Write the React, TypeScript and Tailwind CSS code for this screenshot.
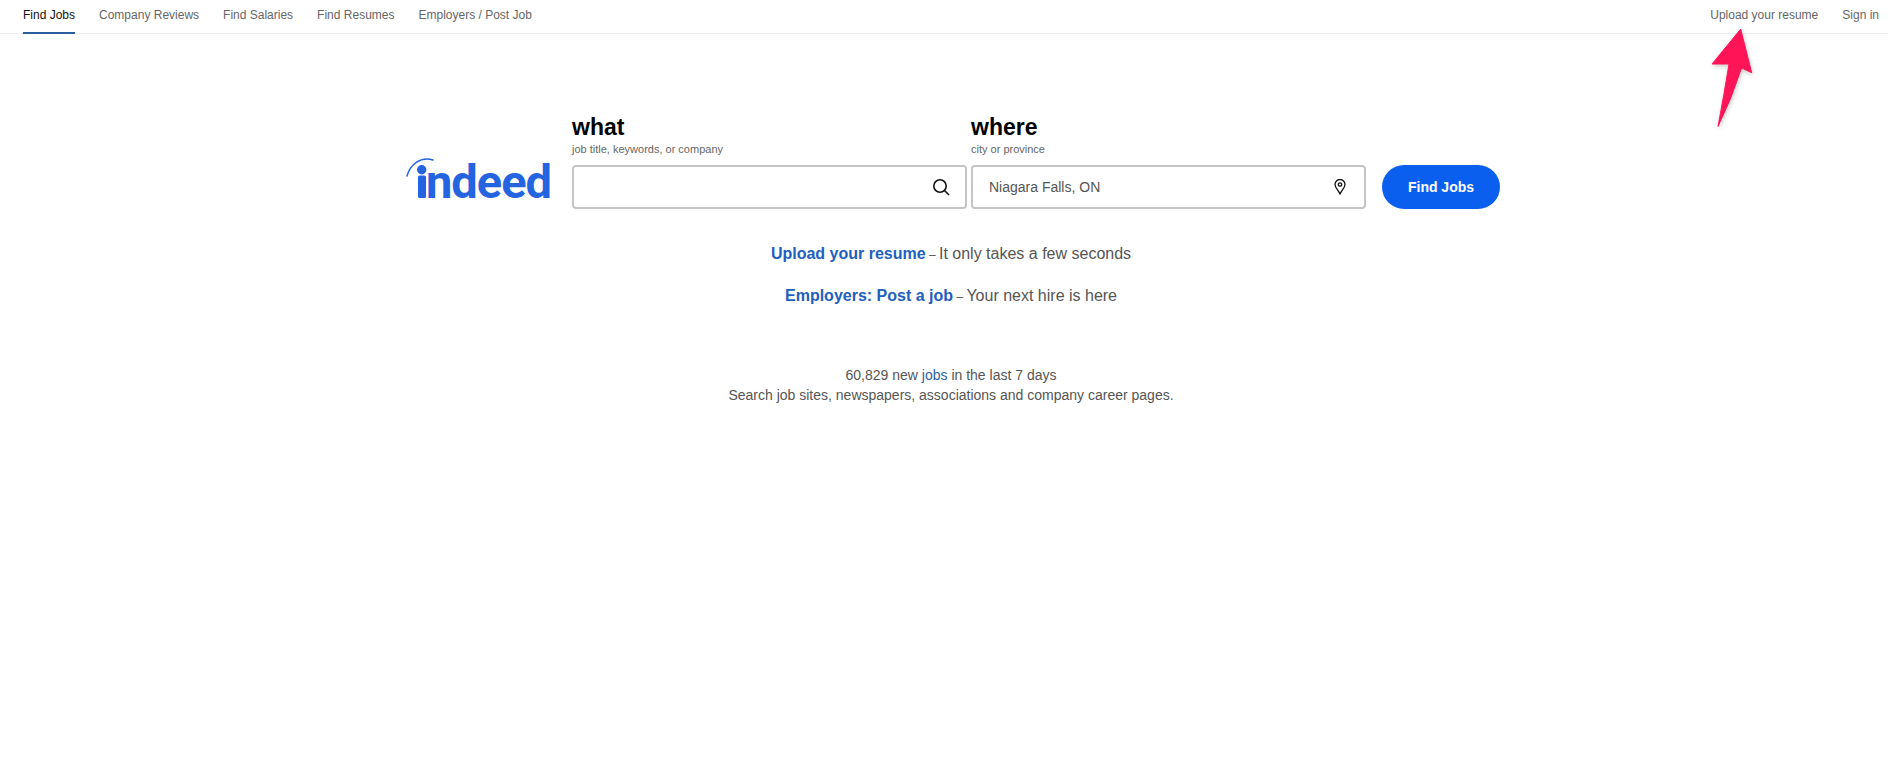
import React from "react";

const navLeft = ["Company Reviews", "Find Salaries", "Find Resumes", "Employers / Post Job"];

function Logo() {
  return (
    <div className="relative w-[147px] h-[46px] shrink-0">
      <span className="absolute left-[20px] top-[-7px] text-[47px] leading-[56px] font-bold tracking-[-1px] text-[#2464e0] font-['Roboto',sans-serif]">
        ndeed
      </span>
      <svg className="absolute left-0 top-[-6px]" width="40" height="46" viewBox="0 0 40 46">
        <circle cx="15.700" cy="14.700" r="4.700" fill="#2464e0" />
        <rect x="12" y="20.500" width="8" height="22.500" rx="1.500" fill="#2464e0" />
        <path d="M1 21C4 10 14 1 27 5" fill="none" stroke="#2464e0" strokeWidth="1.500" strokeLinecap="round" />
      </svg>
    </div>
  );
}

function Field({ title, hint, value, icon }: { title: string; hint: string; value?: string; icon: React.ReactNode }) {
  return (
    <div className="w-[395px] shrink-0">
      <div className="text-[23px] leading-[26px] font-bold text-black mt-[-2px]">{title}</div>
      <div className="text-[11px] leading-[12px] mt-[3px] text-[#666]">{hint}</div>
      <div className="mt-[10px] h-[44px] border-2 border-[#c4c4c4] rounded-[4px] flex items-center justify-between pl-[16px] pr-[15px] text-[14px] text-[#555]">
        <span>{value}</span>
        {icon}
      </div>
    </div>
  );
}

export default function App() {
  return (
    <div className="relative min-h-[782px] bg-white font-['Liberation_Sans',Arial,sans-serif]">
      <nav className="h-[34px] border-b border-[#ececec] flex justify-between pl-[23px] pr-[9px] text-[12px] text-[#666]">
        <div className="flex gap-[24px]">
          <a className="h-[34px] leading-[30px] text-[#111] border-b-2 border-[#2b5c9e]">Find Jobs</a>
          {navLeft.map((t) => (
            <a key={t} className="leading-[30px]">{t}</a>
          ))}
        </div>
        <div className="flex gap-[24px]">
          <a className="leading-[30px]">Upload your resume</a>
          <a className="leading-[30px]">Sign in</a>
        </div>
      </nav>

      <svg className="absolute left-[1700px] top-[20px] drop-shadow-[1px_2px_2px_rgba(0,0,0,0.2)]" width="70" height="120" viewBox="0 0 70 120">
        <path d="M40.700 9L12 44L29 44Q24 75 18 106.500Q32 78 41.500 48L51.700 52.700Z" fill="#ff1557" stroke="#ff1557" strokeLinejoin="round" />
      </svg>

      <main className="pt-[82px]">
        <div className="flex items-end pl-[406px]">
          <div className="mb-[2px] mr-[19px] h-[46px]"><Logo /></div>
          <div className="flex gap-[4px]">
            <Field
              title="what"
              hint="job title, keywords, or company"
              icon={
                <svg width="18" height="18" viewBox="0 0 18 18" fill="none" stroke="#111" strokeWidth="1.600">
                  <circle cx="8" cy="8" r="6.200" />
                  <path d="M12.500 12.500L17 17" />
                </svg>
              }
            />
            <Field
              title="where"
              hint="city or province"
              value="Niagara Falls, ON"
              icon={
                <svg width="12" height="16" viewBox="0 0 12 16" fill="none" stroke="#111" strokeWidth="1.300" className="mr-[3px]">
                  <path d="M6 15C4 11 1 8.500 1 5.500a5 5 0 0 1 10 0C11 8.500 8 11 6 15Z" />
                  <circle cx="6" cy="5.500" r="1.700" />
                </svg>
              }
            />
          </div>
          <button className="ml-[16px] w-[118px] h-[44px] rounded-[22px] bg-[#0a5fef] text-white text-[14px] font-bold">Find Jobs</button>
        </div>

        <div className="pl-[14px] text-center">
          <p className="mt-[35px] h-[20px] text-[16px] leading-[20px] text-[#555]">
            <a className="font-bold text-[#2160bd]">Upload your resume</a>
            <span className="text-[12px]"> – </span>It only takes a few seconds
          </p>
          <p className="mt-[22px] h-[20px] text-[16px] leading-[20px] text-[#555]">
            <a className="font-bold text-[#2160bd]">Employers: Post a job</a>
            <span className="text-[12px]"> – </span>Your next hire is here
          </p>
          <p className="mt-[59px] text-[14px] leading-[20px] text-[#555]">
            60,829 new <a className="text-[#2e5f9e]">jobs</a> in the last 7 days
          </p>
          <p className="text-[14px] leading-[20px] text-[#555]">Search job sites, newspapers, associations and company career pages.</p>
        </div>
      </main>
    </div>
  );
}
